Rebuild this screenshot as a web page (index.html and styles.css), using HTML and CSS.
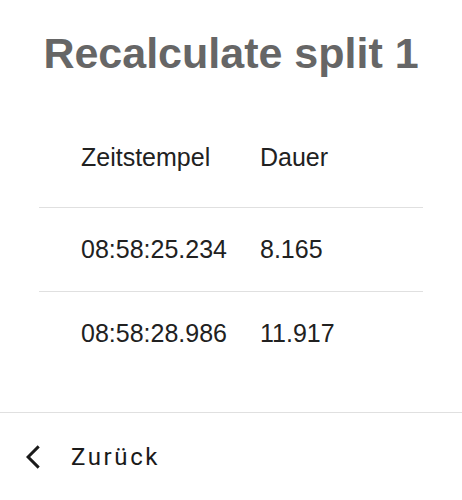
FILE: index.html
```html
<!DOCTYPE html>
<html>
  <head>
    <title>Recalculate split</title>
    <link rel="stylesheet" href="styles.css">
  </head>

  <body>
    <div id="page">
      <h1 class="title">Recalculate split 1</h1>
      <table class="splits">
        <colgroup>
          <col class="col-time" />
          <col />
        </colgroup>
        <thead>
          <tr>
            <th>Zeitstempel</th>
            <th>Dauer</th>
          </tr>
        </thead>
        <tbody>
          <tr>
            <td>08:58:25.234</td>
            <td>8.165</td>
          </tr>
          <tr>
            <td>08:58:28.986</td>
            <td>11.917</td>
          </tr>
        </tbody>
      </table>
      <div class="footer">
        <button class="back" type="button">
          <svg class="back-icon" viewBox="0 0 24 24" width="28" height="28">
            <path d="M17.77 3.77 16 2 6 12l10 10 1.77-1.77L9.54 12z" />
          </svg>
          <span>Zurück</span>
        </button>
      </div>
    </div>
  </body>
</html>
```

FILE: styles.css
```css
body {
  margin: 0;
  background: #fff;
  font-family: 'Liberation Sans', Arial, sans-serif;
}

#page {
  display: flex;
  flex-direction: column;
  height: 100vh;
}

.title {
  margin: 29px 0 0;
  font-size: 43px;
  line-height: 49px;
  font-weight: bold;
  text-align: center;
  color: #666;
}

.splits {
  margin: 31px 39px 0;
  width: calc(100% - 78px);
  table-layout: fixed;
  border-collapse: separate;
  border-spacing: 0;
  font-size: 25px;
  color: #212121;
}

.col-time {
  width: 179px;
}

.splits th,
.splits td {
  padding: 0 0 0 42px;
  text-align: left;
  white-space: nowrap;
}

.splits th {
  height: 96px;
  padding-bottom: 2px;
  font-weight: normal;
  border-bottom: 1px solid #e0e0e0;
}

.splits td {
  height: 83px;
}

.splits tbody tr + tr td {
  border-top: 1px solid #e0e0e0;
}

.footer {
  margin-top: auto;
  height: 87px;
  border-top: 1px solid #e0e0e0;
  display: flex;
  align-items: center;
}

.back {
  display: flex;
  align-items: center;
  gap: 24px;
  margin-left: 19px;
  padding: 0;
  border: none;
  background: none;
  color: #1a1a1a;
  font-family: Roboto, sans-serif;
  font-size: 24px;
  letter-spacing: 2.6px;
}

.back-icon {
  fill: currentColor;
}
```
